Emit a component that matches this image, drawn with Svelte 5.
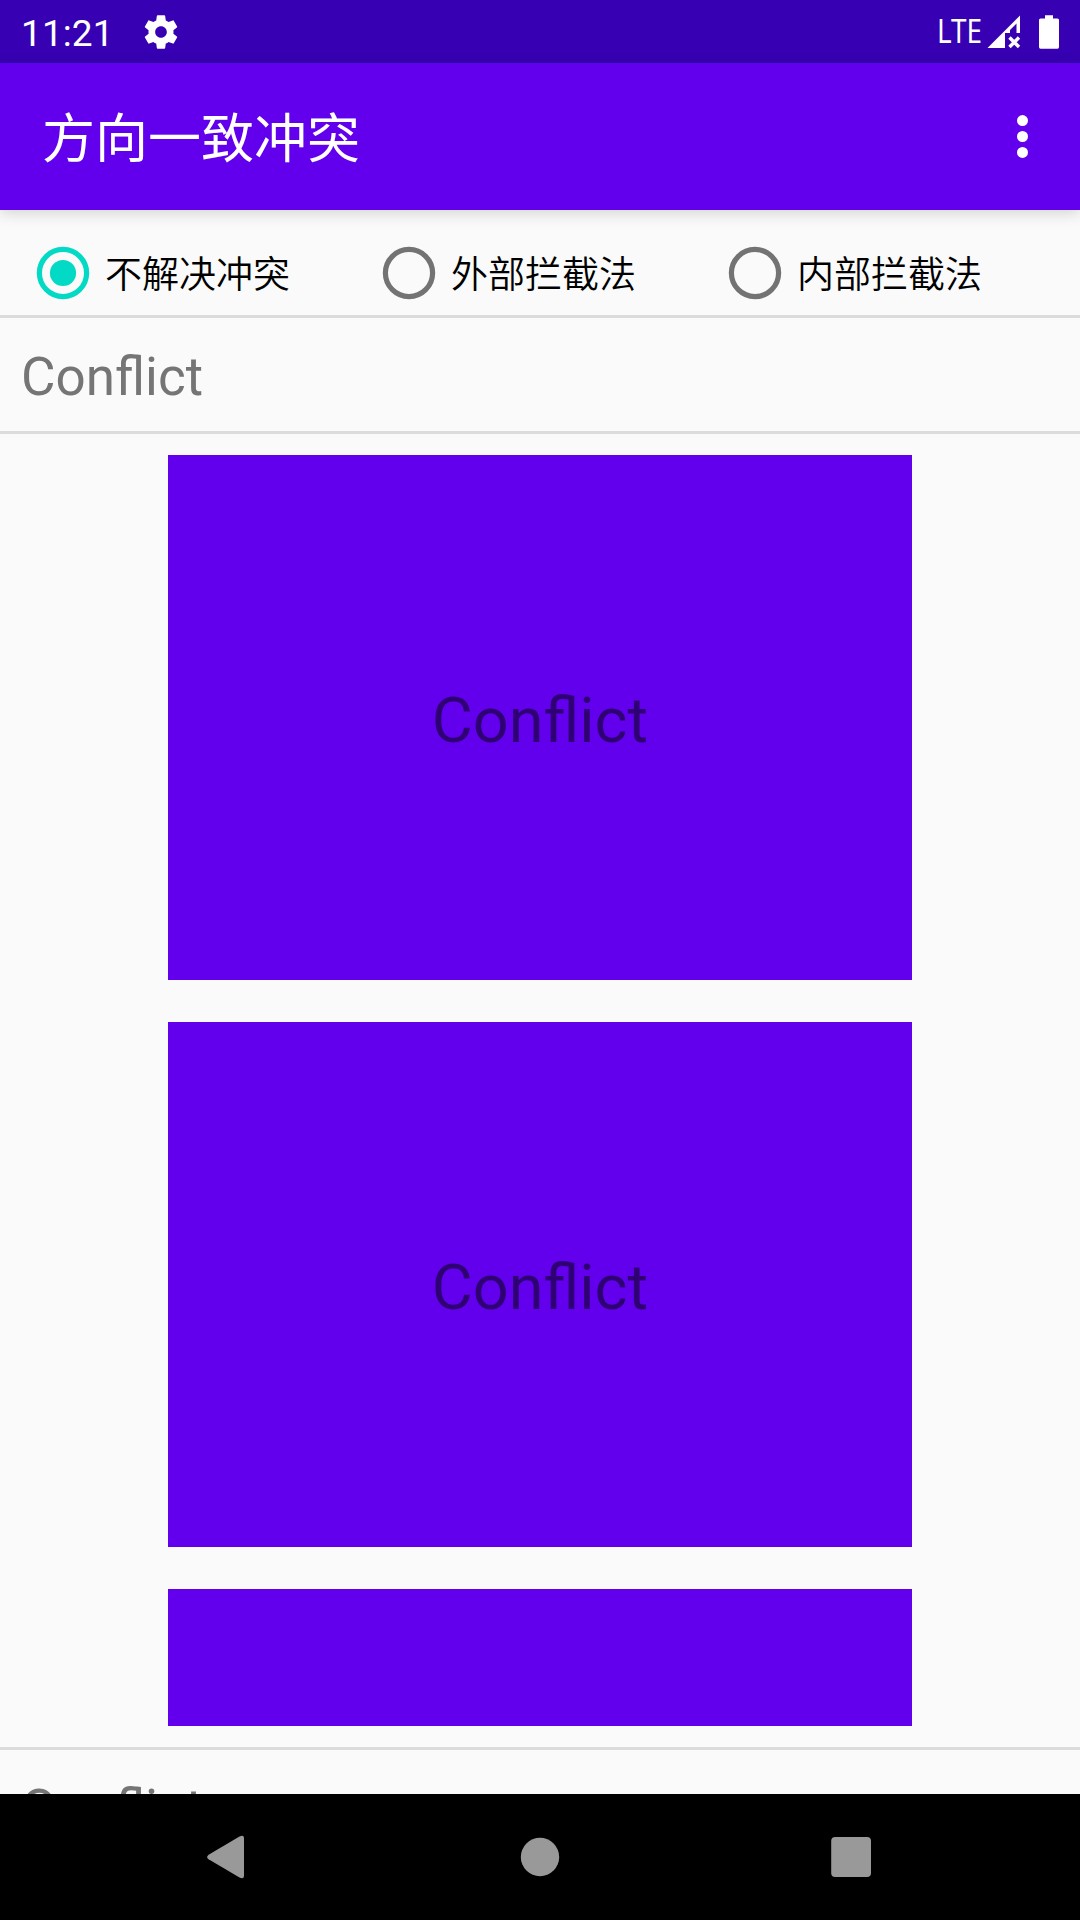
<script>
  const options = ['不解决冲突', '外部拦截法', '内部拦截法'];
  let selected = $state(0);
</script>

<div class="screen">
  <header class="status">
    <span class="clock">11:21</span>
    <svg class="gear" width="40" height="40" viewBox="0 0 24 24" fill="#fff">
      <path d="M19.43 12.98c.04-.32.07-.64.07-.98s-.03-.66-.07-.98l2.11-1.65c.19-.15.24-.42.12-.64l-2-3.46c-.12-.22-.39-.3-.61-.22l-2.49 1c-.52-.4-1.08-.73-1.69-.98l-.38-2.65C14.46 2.18 14.25 2 14 2h-4c-.25 0-.46.18-.49.42l-.38 2.65c-.61.25-1.17.59-1.69.98l-2.49-1c-.23-.09-.49 0-.61.22l-2 3.46c-.13.22-.07.49.12.64l2.11 1.65c-.04.32-.07.65-.07.98s.03.66.07.98l-2.11 1.65c-.19.15-.24.42-.12.64l2 3.46c.12.22.39.3.61.22l2.49-1c.52.4 1.08.73 1.69.98l.38 2.65c.03.24.24.42.49.42h4c.25 0 .46-.18.49-.42l.38-2.65c.61-.25 1.17-.59 1.69-.98l2.49 1c.23.09.49 0 .61-.22l2-3.46c.12-.22.07-.49-.12-.64l-2.11-1.65zM12 15.5c-1.93 0-3.5-1.57-3.5-3.5s1.57-3.5 3.5-3.5 3.5 1.57 3.5 3.5-1.57 3.5-3.5 3.5z" />
    </svg>
    <div class="tray">
      <svg class="lte" width="50" height="48" viewBox="0 0 50 48">
        <text x="1" y="34.5" textLength="45" lengthAdjust="spacingAndGlyphs">LTE</text>
      </svg>
      <svg class="signal" width="34" height="34" viewBox="0 0 34 34">
        <path fill="#fff" fill-rule="evenodd" d="M0.5 33 L33 0.5 V18 H29.5 V8.5 L23 15 V18 H18 V33 Z" />
        <path stroke="#fff" stroke-width="3.4" d="M22.5 22.5 L32 32 M32 22.5 L22.5 32" />
      </svg>
      <svg class="battery" width="20" height="34" viewBox="0 0 20 34" fill="#fff">
        <path d="M6 0.3H14V3.5H18.5Q20 3.5 20 5V32Q20 33.7 18.5 33.7H1.5Q0 33.7 0 32V5Q0 3.5 1.5 3.5H6Z" />
      </svg>
    </div>
  </header>

  <div class="appbar">
    <h1>方向一致冲突</h1>
    <svg class="more" width="12" height="44" viewBox="0 0 12 44" fill="#fff">
      <circle cx="5.5" cy="5.6" r="5.5" />
      <circle cx="5.5" cy="21.5" r="5.5" />
      <circle cx="5.5" cy="37.4" r="5.5" />
    </svg>
  </div>

  <div class="radios">
    {#each options as label, i}
      <button class="radio" class:on={selected === i} onclick={() => (selected = i)}>
        <svg width="54" height="54" viewBox="0 0 54 54">
          <circle cx="27" cy="27" r="23.6" fill="none" stroke="currentColor" stroke-width="5.2" />
          {#if selected === i}<circle cx="27" cy="27" r="13.1" fill="currentColor" />{/if}
        </svg>
        <span>{label}</span>
      </button>
    {/each}
  </div>

  <main>
    <div class="row">Conflict</div>
    <div class="list">
      <div class="card">Conflict</div>
      <div class="card">Conflict</div>
      <div class="card"></div>
    </div>
    <div class="row">Conflict</div>
  </main>

  <nav>
    <svg width="1080" height="126" viewBox="0 0 1080 126" fill="#999">
      <path d="M239.5 42.6Q243.8 40.5 244 44V82Q243.8 85.5 239.5 83.6L208.6 65.3Q205.6 63 208.6 60.7Z" />
      <circle cx="540" cy="63" r="19.2" />
      <rect x="831.2" y="43" width="39.8" height="40" rx="4" />
    </svg>
  </nav>
</div>

<style>
  :global(body) {
    margin: 0;
  }
  .screen {
    width: 1080px;
    height: 1920px;
    display: flex;
    flex-direction: column;
    overflow: hidden;
    background: #fafafa;
    font-family: Roboto, 'Noto Sans CJK SC', sans-serif;
  }
  .status {
    flex: none;
    height: 63px;
    box-sizing: border-box;
    padding: 0 21px;
    display: flex;
    align-items: center;
    background: #3700b3;
    color: #fff;
  }
  .clock {
    font-size: 37px;
    line-height: 40px;
    padding-top: 4px;
    letter-spacing: 0.1px;
  }
  .gear {
    margin-left: 27px;
  }
  .tray {
    margin-left: auto;
    display: flex;
    align-items: center;
  }
  .lte text {
    font-family: 'Noto Sans', sans-serif;
    font-size: 32px;
    fill: #fff;
  }
  .lte {
    margin-right: 1px;
  }
  .battery {
    margin-left: 18px;
  }
  .appbar {
    flex: none;
    height: 147px;
    box-sizing: border-box;
    padding: 0 51px 0 42px;
    display: flex;
    align-items: center;
    justify-content: space-between;
    background: #6200ee;
    color: #fff;
    box-shadow: 0 3px 14px rgba(0, 0, 0, 0.16);
  }
  h1 {
    margin: 0;
    padding-top: 7px;
    font-size: 53px;
    font-weight: 400;
    line-height: 76px;
  }
  .radios {
    flex: none;
    height: 108px;
    box-sizing: border-box;
    padding: 21px 6px 0 36px;
    display: grid;
    grid-template-columns: repeat(3, 346px);
    border-bottom: 3px solid #dcdcdc;
  }
  .radio {
    display: flex;
    align-items: center;
    gap: 15px;
    height: 84px;
    padding: 0;
    border: 0;
    background: none;
    font: inherit;
    font-size: 37px;
    font-weight: 350;
    color: #737373;
  }
  .radio.on {
    color: #03dac5;
  }
  .radio span {
    padding-bottom: 3px;
    color: #000;
  }
  main {
    flex: 1;
    min-height: 0;
    overflow: hidden;
  }
  .row {
    height: 113px;
    padding-left: 21px;
    line-height: 119px;
    font-size: 53px;
    color: #757575;
    border-bottom: 3px solid #dcdcdc;
  }
  .list {
    height: 1316px;
    box-sizing: border-box;
    padding: 21px 168px;
    display: flex;
    flex-direction: column;
    gap: 42px;
    overflow: hidden;
    border-bottom: 3px solid #dcdcdc;
  }
  .card {
    flex: none;
    height: 525px;
    box-sizing: border-box;
    padding-top: 6px;
    display: flex;
    align-items: center;
    justify-content: center;
    background: #6200ee;
    color: #2f0073;
    font-size: 63px;
  }
  .card:last-child {
    height: 137px;
  }
  nav {
    flex: none;
    height: 126px;
    background: #000;
  }
  nav svg {
    display: block;
  }
</style>
